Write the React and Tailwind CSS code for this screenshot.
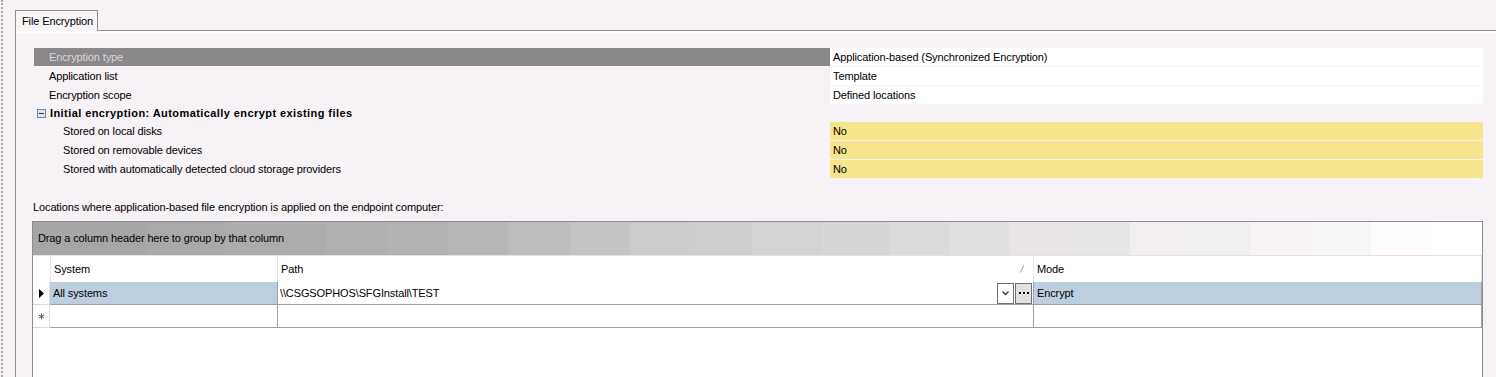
import React from "react";

const groupBg =
  "bg-[linear-gradient(to_right,#a6a6a6_0%,#a6a6a6_7.87%,#a9a9a9_7.87%,#a9a9a9_13.26%,#acacac_13.26%,#acacac_20.23%,#afafaf_20.23%,#afafaf_24.52%,#b3b3b3_24.52%,#b3b3b3_28.66%,#b7b7b7_28.66%,#b7b7b7_32.8%,#bdbdbe_32.8%,#bdbdbe_37.09%,#c4c4c4_37.09%,#c4c4c4_41.23%,#cbcacc_41.23%,#cbcacc_45.37%,#cdcdcd_45.37%,#cdcdcd_49.59%,#d3d3d3_49.59%,#d3d3d3_54.42%,#d6d6d6_54.42%,#d6d6d6_59.05%,#dcdadc_59.05%,#dcdadc_63.19%,#e0e0e0_63.19%,#e0e0e0_67.33%,#e8e4e7_67.33%,#e8e4e7_71.55%,#e6e6e6_71.55%,#e6e6e6_75.69%,#f1edf0_75.69%,#f1edf0_79.63%,#efefef_79.63%,#efefef_84.05%,#f6f2f5_84.05%,#f6f2f5_88.19%,#f6f6f6_88.19%,#f6f6f6_92.33%,#fffbff_92.33%,#fffbff_96.55%,#ffffff_96.55%,#ffffff_100%)]";

function PropRow({ label, value, selected, indent, yellow }) {
  return (
    <div className="flex h-[18px] mb-[1px]">
      <div
        className={`w-[796px] shrink-0 flex items-center ${
          indent ? "pl-[29px]" : "pl-[15px]"
        } ${selected ? "bg-[#898789] text-[#d9d5d9]" : ""}`}
      >
        {label}
      </div>
      <div
        className={`flex-1 flex items-center pl-[3px] ${
          yellow ? "bg-[#f5e58c]" : "bg-white"
        }`}
      >
        {value}
      </div>
    </div>
  );
}

export default function App() {
  return (
    <div className="w-[1496px] h-[377px] bg-[#f6f2f5] flex overflow-hidden font-['Liberation_Sans',Arial,sans-serif] text-[11px] leading-[13px] tracking-[-0.12px] text-black">
      {/* dotted splitter on the left */}
      <div className="w-[15px] shrink-0 flex">
        <div className="ml-[1px] h-full border-l-2 border-dotted border-[#a9a9a9]" />
      </div>

      <div className="flex-1 flex flex-col pt-[10px]">
        {/* tab strip */}
        <div className="flex h-[21px] shrink-0">
          <div className="w-[83px] border-l border-t border-r border-[#8f8f8f] bg-[#f8f5f7] flex items-center pl-[6px]">
            File Encryption
          </div>
          <div className="flex-1 border-b border-[#8f8f8f]" />
        </div>

        {/* tab page */}
        <div className="flex-1 border-l border-[#8f8f8f] flex flex-col">
          <div className="h-[2px] bg-[#fdfcfd] shrink-0" />
          <div className="pl-[18px] pr-[15px] pt-[15px] flex flex-col">
            <PropRow
              label="Encryption type"
              value="Application-based (Synchronized Encryption)"
              selected
            />
            <PropRow label="Application list" value="Template" />
            <PropRow label="Encryption scope" value="Defined locations" />

            <div className="h-[17px] flex items-center">
              <div className="ml-[3px] mr-[4px] w-[9px] h-[9px] border border-[#7189a9] bg-[#dbe6f3] flex items-center justify-center">
                <div className="w-[5px] h-px bg-[#1c3560]" />
              </div>
              <span className="font-bold tracking-[0.42px]">
                Initial encryption: Automatically encrypt existing files
              </span>
            </div>

            <PropRow label="Stored on local disks" value="No" indent yellow />
            <PropRow label="Stored on removable devices" value="No" indent yellow />
            <PropRow
              label="Stored with automatically detected cloud storage providers"
              value="No"
              indent
              yellow
            />

            <div className="mt-[21px] -ml-[1px] h-[14px] flex items-center">
              Locations where application-based file encryption is applied on the endpoint computer:
            </div>

            {/* grid */}
            <div className="mt-[7px] -ml-[2px] w-[1451px] h-[200px] border border-[#8b8b97] bg-white flex flex-col">
              <div className={`h-[33px] shrink-0 flex items-center pl-[5px] ${groupBg}`}>
                Drag a column header here to group by that column
              </div>

              {/* header row */}
              <div className="h-[27px] shrink-0 flex border-t border-[#e1e1e1] bg-white">
                <div className="w-[17px] shrink-0" />
                <div className="w-[228px] shrink-0 border-l border-r border-[#e3e3e3] flex items-center pl-[3px]">
                  System
                </div>
                <div className="w-[756px] shrink-0 border-r border-[#e3e3e3] flex items-center pl-[3px] pr-[9px]">
                  <span className="flex-1">Path</span>
                  <svg width="4" height="8" viewBox="0 0 4 8">
                    <path d="M3.5 0.5 L0.5 7.5" stroke="#9a9a9a" strokeWidth="1" />
                  </svg>
                </div>
                <div className="flex-1 border-r border-[#e3e3e3] flex items-center pl-[3px]">
                  Mode
                </div>
              </div>

              {/* data row */}
              <div className="h-[23px] shrink-0 flex">
                <div className="w-[17px] shrink-0 border-b border-r border-[#dcdcdc] flex items-center pl-[6px]">
                  <svg width="5" height="9" viewBox="0 0 5 9">
                    <path d="M0 0 L5 4.5 L0 9 Z" fill="#000" />
                  </svg>
                </div>
                <div className="w-[228px] shrink-0 bg-[#bdcfdf] border-b border-r border-[#a0a0a0] flex items-center pl-[3px]">
                  All systems
                </div>
                <div className="w-[756px] shrink-0 bg-white border-b border-r border-[#a0a0a0] flex items-center pl-[2px] pr-[1px]">
                  <span className="flex-1">\\CSGSOPHOS\SFGInstall\TEST</span>
                  <div className="w-[17px] h-[21px] border border-[#707070] bg-white flex items-center justify-center">
                    <svg width="7" height="5" viewBox="0 0 7 5">
                      <path d="M0.5 0.5 L3.5 3.5 L6.5 0.5" stroke="#333" strokeWidth="1.3" fill="none" />
                    </svg>
                  </div>
                  <div className="ml-[1px] w-[17px] h-[21px] border border-[#707070] bg-[#e1e1e1] flex items-center justify-center gap-[2px]">
                    <div className="w-[2px] h-[2px] bg-black" />
                    <div className="w-[2px] h-[2px] bg-black" />
                    <div className="w-[2px] h-[2px] bg-black" />
                  </div>
                </div>
                <div className="flex-1 bg-[#bdcfdf] border-b border-r border-[#a0a0a0] flex items-center pl-[3px]">
                  Encrypt
                </div>
              </div>

              {/* new row */}
              <div className="h-[23px] shrink-0 flex">
                <div className="w-[17px] shrink-0 border-b border-r border-[#dcdcdc] flex items-center pl-[5px]">
                  <svg width="7" height="7" viewBox="0 0 7 7">
                    <path
                      d="M3.5 0.5 V6.5 M0.9 2 L6.1 5 M0.9 5 L6.1 2"
                      stroke="#555"
                      strokeWidth="1"
                    />
                  </svg>
                </div>
                <div className="w-[228px] shrink-0 border-b border-r border-[#a0a0a0]" />
                <div className="w-[756px] shrink-0 border-b border-r border-[#a0a0a0]" />
                <div className="flex-1 border-b border-r border-[#a0a0a0]" />
              </div>

              <div className="flex-1" />
            </div>
          </div>
        </div>
      </div>
    </div>
  );
}
